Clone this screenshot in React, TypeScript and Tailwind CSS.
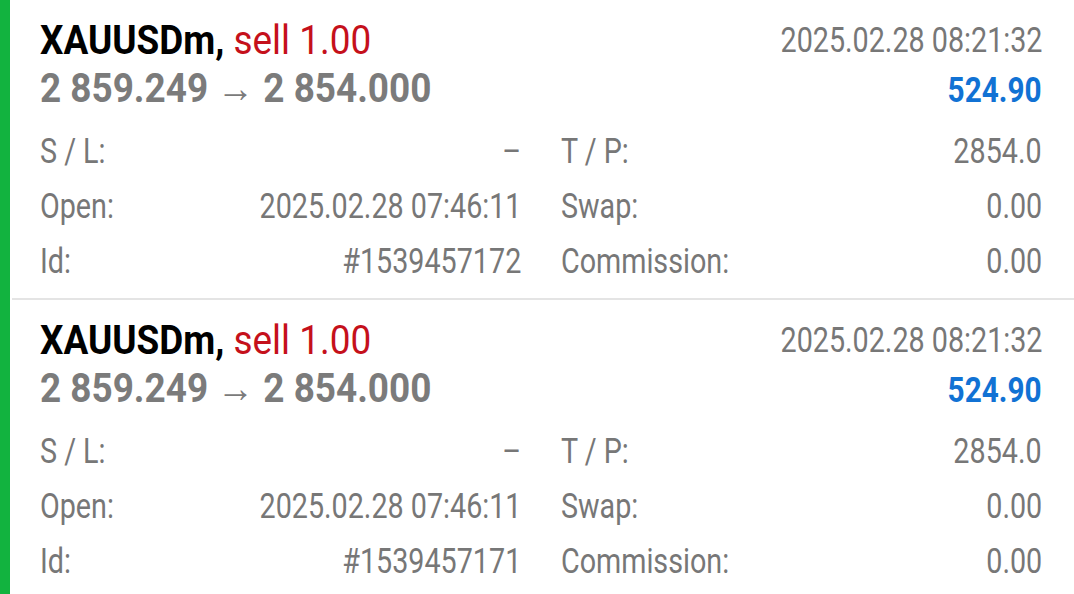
const trades = [
  { id: "#1539457172" },
  { id: "#1539457171" },
];

function L({ children, className = "" }: { children: React.ReactNode; className?: string }) {
  return <span className={`inline-block whitespace-nowrap origin-left ${className}`}>{children}</span>;
}

function R({ children, className = "" }: { children: React.ReactNode; className?: string }) {
  return <span className={`inline-block whitespace-nowrap origin-right ${className}`}>{children}</span>;
}

function TradeCard({ id }: { id: string }) {
  return (
    <div className="pl-[28px] pr-[32px] pt-[17px] pb-[8px]">
      {/* header */}
      <div className="flex justify-between items-center h-[48px]">
        <L className="text-[41px] font-bold text-black scale-x-[0.9]">
          XAUUSDm, <span className="font-normal text-[#c5101b]">sell 1.00</span>
        </L>
        <R className="text-[35px] text-[#777777] scale-x-[0.82]">2025.02.28 08:21:32</R>
      </div>
      <div className="flex justify-between items-center h-[48px]">
        <L className="text-[41px] font-bold text-[#7b7b7b] scale-x-[0.9]">2 859.249 → 2 854.000</L>
        <R className="text-[35px] font-bold text-[#1172d4] scale-x-[0.85] mt-[5px]">524.90</R>
      </div>

      {/* details */}
      <div className="grid grid-cols-2 gap-x-[40px] mt-[12px] text-[35px] text-[#777777]">
        {[
          ["S / L:", "–"],
          ["T / P:", "2854.0"],
          ["Open:", "2025.02.28 07:46:11"],
          ["Swap:", "0.00"],
          ["Id:", id],
          ["Commission:", "0.00"],
        ].map(([label, value]) => (
          <div key={label} className="flex justify-between items-center h-[55px]">
            <L className="scale-x-[0.82]">{label}</L>
            <R className="scale-x-[0.82]">{value}</R>
          </div>
        ))}
      </div>
    </div>
  );
}

export default function App() {
  return (
    <div className="w-[1074px] h-[594px] overflow-hidden bg-white flex" style={{ fontFamily: "Roboto, sans-serif" }}>
      <div className="w-[10px] bg-[#12b33f] shrink-0" />
      <div className="flex-1 min-w-0">
        {trades.map((t, i) => (
          <div key={t.id} className={i === 0 ? "border-b-2 border-[#e4e4e4] ml-[2px]" : "ml-[2px]"}>
            <TradeCard id={t.id} />
          </div>
        ))}
      </div>
    </div>
  );
}
